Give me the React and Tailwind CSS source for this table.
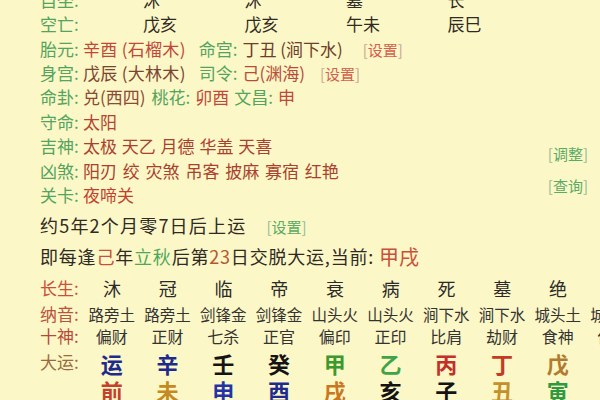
const GREEN = "text-[#52a45e]";

const Tag = ({ text, green }) =>
  green ? (
    <span className="text-[15px] text-[#93b99a]">
      [<span className="text-[#5aab67]">{text}</span>]
    </span>
  ) : (
    <span className="text-[15px] text-[#c6a596]">
      [<span className="text-[#d4604f]">{text}</span>]
    </span>
  );

const Label = ({ children }) => <span className={`inline-block w-[43px] ${GREEN}`}>{children}</span>;

const Row = ({ children }) => <div className="flex h-[24.4px] items-center whitespace-nowrap">{children}</div>;

const changsheng = ["沐", "冠", "临", "帝", "衰", "病", "死", "墓", "绝", "胎"];
const nayin = ["路旁土", "路旁土", "剑锋金", "剑锋金", "山头火", "山头火", "涧下水", "涧下水", "城头土", "城头土"];
const shishen = ["偏财", "正财", "七杀", "正官", "偏印", "正印", "比肩", "劫财", "食神", "伤官"];

const gan = [
  ["运", "text-[#1d2b8e]"],
  ["辛", "text-[#1d2b8e]"],
  ["壬", "text-[#141414]"],
  ["癸", "text-[#141414]"],
  ["甲", "text-[#3b9a2d]"],
  ["乙", "text-[#3fa34a]"],
  ["丙", "text-[#c1302a]"],
  ["丁", "text-[#c23b24]"],
  ["戊", "text-[#b27a2c]"],
  ["己", "text-[#b27a2c]"],
];
const zhi = [
  ["前", "text-[#c2402c]"],
  ["未", "text-[#c4891f]"],
  ["申", "text-[#2434a8]"],
  ["酉", "text-[#1d2b8e]"],
  ["戌", "text-[#c8781f]"],
  ["亥", "text-[#141414]"],
  ["子", "text-[#141414]"],
  ["丑", "text-[#c4902a]"],
  ["寅", "text-[#2e9a3e]"],
  ["卯", "text-[#2e9a3e]"],
];

export default function App() {
  return (
    <div className="w-[600px] h-[400px] overflow-hidden bg-[#fcf7c6] font-['Noto_Sans_CJK_SC','Noto_Sans',sans-serif] text-[17px] text-[#2e2a24]">
      {/* 上半部分 */}
      <div className="mt-[-12.7px] pl-[40px]">
        <Row>
          <span className={`w-[103px] ${GREEN}`}>自坐:</span>
          {["沐", "沐", "墓", "长"].map((v, i) => (
            <span key={i} className="w-[101.5px]">{v}</span>
          ))}
        </Row>
        <Row>
          <span className={`w-[103px] ${GREEN}`}>空亡:</span>
          {["戊亥", "戊亥", "午未", "辰巳"].map((v, i) => (
            <span key={i} className="w-[101.5px]">{v}</span>
          ))}
        </Row>
        <Row>
          <Label>胎元:</Label>
          <span className="text-[#c1473a] tracking-[0.3px]">辛酉 (石榴木)</span>
          <span className={`ml-[13px] ${GREEN}`}>命宫:</span>
          <span className="ml-[5px] text-[#6e3d2c]">丁丑 (涧下水)</span>
          <span className="ml-[20px]"><Tag text="设置" /></span>
        </Row>
        <Row>
          <Label>身宫:</Label>
          <span className="text-[#7a4431] tracking-[0.3px]">戊辰 (大林木)</span>
          <span className={`ml-[13px] ${GREEN}`}>司令:</span>
          <span className="ml-[5px] text-[#b84c3a]">己(渊海)</span>
          <span className="ml-[15px]"><Tag text="设置" /></span>
        </Row>
        <Row>
          <Label>命卦:</Label>
          <span className="text-[#8a4a35]">兑(西四)</span>
          <span className={`ml-[6px] ${GREEN}`}>桃花:</span>
          <span className="ml-[5px] text-[#c1473a]">卯酉</span>
          <span className={`ml-[5px] ${GREEN}`}>文昌:</span>
          <span className="ml-[5px] text-[#c1473a]">申</span>
        </Row>
        <Row>
          <Label>守命:</Label>
          <span className="text-[#b5432f]">太阳</span>
        </Row>
        <div className="flex">
          <div className="flex-1">
            <Row>
              <Label>吉神:</Label>
              <span className="text-[#a9412f] [word-spacing:1px]">太极 天乙 月德 华盖 天喜</span>
            </Row>
            <Row>
              <Label>凶煞:</Label>
              <span className="text-[#a9412f] [word-spacing:2px]">阳刃 绞 灾煞 吊客 披麻 寡宿 红艳</span>
            </Row>
            <Row>
              <Label>关卡:</Label>
              <span className="text-[#c1402f]">夜啼关</span>
            </Row>
          </div>
          <div className="flex flex-col gap-[16px] pt-[12px] pr-[12px] leading-[16px]">
            <Tag text="调整" green />
            <Tag text="查询" green />
          </div>
        </div>
      </div>

      {/* 大运部分 */}
      <div className="mt-[3.6px] pl-[40px] whitespace-nowrap">
        <div className="flex h-[31px] items-center text-[18px] tracking-[1.2px]">
          <span>约5年2个月零7日后上运</span>
          <span className="ml-[20px] tracking-normal"><Tag text="设置" green /></span>
        </div>
        <div className="flex h-[31px] items-center text-[18px] tracking-[0.8px]">
          <span>
            即每逢<span className="text-[#c8503c]">己</span>年<span className="text-[#4fa75c]">立秋</span>后第
            <span className="text-[#b5582f]">23</span>日交脱大运,当前:
          </span>
          <span className="ml-[5px] text-[20px] tracking-normal text-[#c8503c]">甲戌</span>
        </div>

        <div className="flex h-[32px] items-center leading-[24px]">
          <span className="w-[44px] shrink-0 text-[#c8503c]">长生:</span>
          {changsheng.map((v, i) => (
            <span key={i} className="w-[55.75px] shrink-0 text-center text-[18px] text-[#2a2a2a]">{v}</span>
          ))}
        </div>
        <div className="flex h-[20px] items-center leading-[20px]">
          <span className="w-[44px] shrink-0 text-[#b8533d]">纳音:</span>
          {nayin.map((v, i) => (
            <span key={i} className="w-[55.75px] shrink-0 text-center text-[15.5px] text-[#333]">{v}</span>
          ))}
        </div>
        <div className="flex h-[23px] items-center leading-[22px]">
          <span className="w-[44px] shrink-0 text-[#b8483a]">十神:</span>
          {shishen.map((v, i) => (
            <span key={i} className="w-[55.75px] shrink-0 text-center text-[16px] text-[#333]">{v}</span>
          ))}
        </div>
        <div className="flex h-[31px] items-center leading-[28px]">
          <span className="w-[44px] shrink-0 self-start pt-[1px] text-[#9a6a3a]">大运:</span>
          {gan.map(([v, c], i) => (
            <span key={i} className={`w-[55.75px] shrink-0 text-center text-[22px] font-bold ${c}`}>{v}</span>
          ))}
        </div>
        <div className="flex h-[25px] items-center leading-[25px]">
          <span className="w-[44px] shrink-0" />
          {zhi.map(([v, c], i) => (
            <span key={i} className={`w-[55.75px] shrink-0 text-center text-[22px] font-bold ${c}`}>{v}</span>
          ))}
        </div>
      </div>
    </div>
  );
}
